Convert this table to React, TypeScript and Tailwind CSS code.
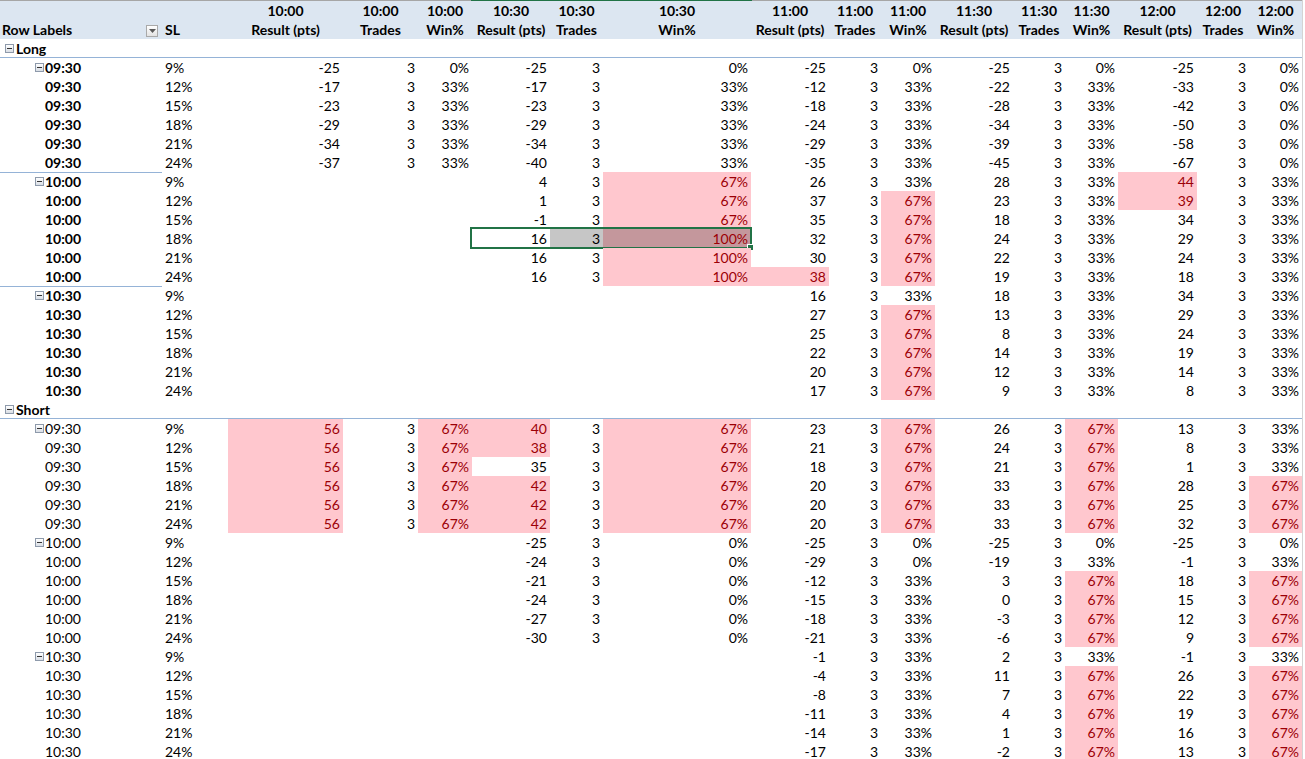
import React from 'react';

// column widths of the pivot, read off the sheet
const COLS =
  'grid grid-cols-[162px_66px_115px_75px_54px_78px_53px_148px_78px_52px_54px_78px_52px_53px_79px_52px_53px]';

const TIMES = ['10:00', '10:30', '11:00', '11:30', '12:00'];
const MEASURES = ['Result (pts)', 'Trades', 'Win%'];

type Group = { label: string; rows: string[] };
type Section = { name: string; bold: boolean; groups: Group[] };

// '_' = empty cell, '*' = conditional format (pink)
const sections: Section[] = [
  {
    name: 'Long',
    bold: true,
    groups: [
      {
        label: '09:30',
        rows: [
          '9% -25 3 0% -25 3 0% -25 3 0% -25 3 0% -25 3 0%',
          '12% -17 3 33% -17 3 33% -12 3 33% -22 3 33% -33 3 0%',
          '15% -23 3 33% -23 3 33% -18 3 33% -28 3 33% -42 3 0%',
          '18% -29 3 33% -29 3 33% -24 3 33% -34 3 33% -50 3 0%',
          '21% -34 3 33% -34 3 33% -29 3 33% -39 3 33% -58 3 0%',
          '24% -37 3 33% -40 3 33% -35 3 33% -45 3 33% -67 3 0%',
        ],
      },
      {
        label: '10:00',
        rows: [
          '9% _ _ _ 4 3 67%* 26 3 33% 28 3 33% 44* 3 33%',
          '12% _ _ _ 1 3 67%* 37 3 67%* 23 3 33% 39* 3 33%',
          '15% _ _ _ -1 3 67%* 35 3 67%* 18 3 33% 34 3 33%',
          '18% _ _ _ 16 3 100%* 32 3 67%* 24 3 33% 29 3 33%',
          '21% _ _ _ 16 3 100%* 30 3 67%* 22 3 33% 24 3 33%',
          '24% _ _ _ 16 3 100%* 38* 3 67%* 19 3 33% 18 3 33%',
        ],
      },
      {
        label: '10:30',
        rows: [
          '9% _ _ _ _ _ _ 16 3 33% 18 3 33% 34 3 33%',
          '12% _ _ _ _ _ _ 27 3 67%* 13 3 33% 29 3 33%',
          '15% _ _ _ _ _ _ 25 3 67%* 8 3 33% 24 3 33%',
          '18% _ _ _ _ _ _ 22 3 67%* 14 3 33% 19 3 33%',
          '21% _ _ _ _ _ _ 20 3 67%* 12 3 33% 14 3 33%',
          '24% _ _ _ _ _ _ 17 3 67%* 9 3 33% 8 3 33%',
        ],
      },
    ],
  },
  {
    name: 'Short',
    bold: false,
    groups: [
      {
        label: '09:30',
        rows: [
          '9% 56* 3 67%* 40* 3 67%* 23 3 67%* 26 3 67%* 13 3 33%',
          '12% 56* 3 67%* 38* 3 67%* 21 3 67%* 24 3 67%* 8 3 33%',
          '15% 56* 3 67%* 35 3 67%* 18 3 67%* 21 3 67%* 1 3 33%',
          '18% 56* 3 67%* 42* 3 67%* 20 3 67%* 33 3 67%* 28 3 67%*',
          '21% 56* 3 67%* 42* 3 67%* 20 3 67%* 33 3 67%* 25 3 67%*',
          '24% 56* 3 67%* 42* 3 67%* 20 3 67%* 33 3 67%* 32 3 67%*',
        ],
      },
      {
        label: '10:00',
        rows: [
          '9% _ _ _ -25 3 0% -25 3 0% -25 3 0% -25 3 0%',
          '12% _ _ _ -24 3 0% -29 3 0% -19 3 33% -1 3 33%',
          '15% _ _ _ -21 3 0% -12 3 33% 3 3 67%* 18 3 67%*',
          '18% _ _ _ -24 3 0% -15 3 33% 0 3 67%* 15 3 67%*',
          '21% _ _ _ -27 3 0% -18 3 33% -3 3 67%* 12 3 67%*',
          '24% _ _ _ -30 3 0% -21 3 33% -6 3 67%* 9 3 67%*',
        ],
      },
      {
        label: '10:30',
        rows: [
          '9% _ _ _ _ _ _ -1 3 33% 2 3 33% -1 3 33%',
          '12% _ _ _ _ _ _ -4 3 33% 11 3 67%* 26 3 67%*',
          '15% _ _ _ _ _ _ -8 3 33% 7 3 67%* 22 3 67%*',
          '18% _ _ _ _ _ _ -11 3 33% 4 3 67%* 19 3 67%*',
          '21% _ _ _ _ _ _ -14 3 33% 1 3 67%* 16 3 67%*',
          '24% _ _ _ _ _ _ -17 3 33% -2 3 67%* 13 3 67%*',
        ],
      },
    ],
  },
];

function Toggle() {
  return (
    <span className="mr-[1px] inline-flex h-[9px] w-[9px] shrink-0 items-center justify-center border border-[#8e9aab] bg-linear-to-b from-white to-[#d9dee5]">
      <span className="h-px w-[5px] bg-[#333]" />
    </span>
  );
}

function FilterButton() {
  return (
    <span className="mb-[2px] mr-[4px] flex h-[12px] w-[12px] items-center justify-center border border-[#a9a9a9] bg-linear-to-b from-white to-[#e3e3e3]">
      <svg width="7" height="4" viewBox="0 0 7 4">
        <polygon points="0,0 7,0 3.5,4" fill="#595959" />
      </svg>
    </span>
  );
}

function Header() {
  return (
    <div className={`${COLS} relative h-[39px] border-t border-[#a6a6a6] bg-[#dce6f1] font-bold`}>
      <div className="absolute left-[471px] top-[-1px] h-px w-[281px] bg-[#217346]" />
      <div className="flex items-end justify-between pl-[2px]">
        <span className="leading-[19px]">Row Labels</span>
        <FilterButton />
      </div>
      <div className="flex items-end pl-[3px]">
        <span className="leading-[19px]">SL</span>
      </div>
      {TIMES.flatMap((t) =>
        MEASURES.map((m) => (
          <div key={t + m} className="flex flex-col items-center leading-[19px]">
            <span>{t}</span>
            <span className="whitespace-nowrap">{m}</span>
          </div>
        ))
      )}
    </div>
  );
}

function DataRow({
  label,
  first,
  bold,
  line,
  row,
  selected,
}: {
  label: string;
  first: boolean;
  bold: boolean;
  line: boolean;
  row: string;
  selected: boolean;
}) {
  const [sl, ...vals] = row.split(' ');
  return (
    <div className={`${COLS} relative h-[19px] leading-[19px]`}>
      <div
        className={`flex items-center ${first ? 'pl-[35px]' : 'pl-[45px]'} ${bold ? 'font-bold' : ''} ${
          line ? 'shadow-[inset_0_1px_0_#95b3d7]' : ''
        }`}
      >
        {first && <Toggle />}
        <span>{label}</span>
      </div>
      <div className="pl-[3px]">{sl}</div>
      {vals.map((v, i) => {
        const pink = v.endsWith('*');
        const text = v.replace('*', '').replace('_', '');
        let cls = pink ? 'bg-[#ffc7ce] text-[#9c0006]' : '';
        if (selected && i === 4) cls = 'bg-[#c6c6c6]';
        if (selected && i === 5) cls = 'bg-[#c4979c] text-[#9c0006]';
        return (
          <div key={i} className={`pr-[3px] text-right ${cls}`}>
            {text}
          </div>
        );
      })}
      {selected && (
        <div className="absolute left-[470px] top-[-2px] h-[22px] w-[282px] border-2 border-[#217346]">
          <div className="absolute bottom-[-4px] right-[-4px] h-[7px] w-[7px] border border-white bg-[#217346]" />
        </div>
      )}
    </div>
  );
}

export default function App() {
  return (
    <div className="h-[759px] w-[1305px] overflow-hidden bg-white font-[Lato,sans-serif] text-[14px] text-black">
      <div className="w-[1303px] border-r border-[#d4d4d4]">
        <Header />
        {sections.map((s) => (
          <div key={s.name}>
            <div className="flex h-[19px] items-center pl-[5px] font-bold leading-[19px] shadow-[inset_0_-1px_0_#95b3d7]">
              <Toggle />
              <span className="pl-[1px]">{s.name}</span>
            </div>
            {s.groups.map((g, gi) =>
              g.rows.map((r, ri) => (
                <DataRow
                  key={g.label + ri}
                  label={g.label}
                  first={ri === 0}
                  bold={s.bold}
                  line={s.bold && gi > 0 && ri === 0}
                  row={r}
                  selected={s.name === 'Long' && gi === 1 && ri === 3}
                />
              ))
            )}
          </div>
        ))}
      </div>
    </div>
  );
}
